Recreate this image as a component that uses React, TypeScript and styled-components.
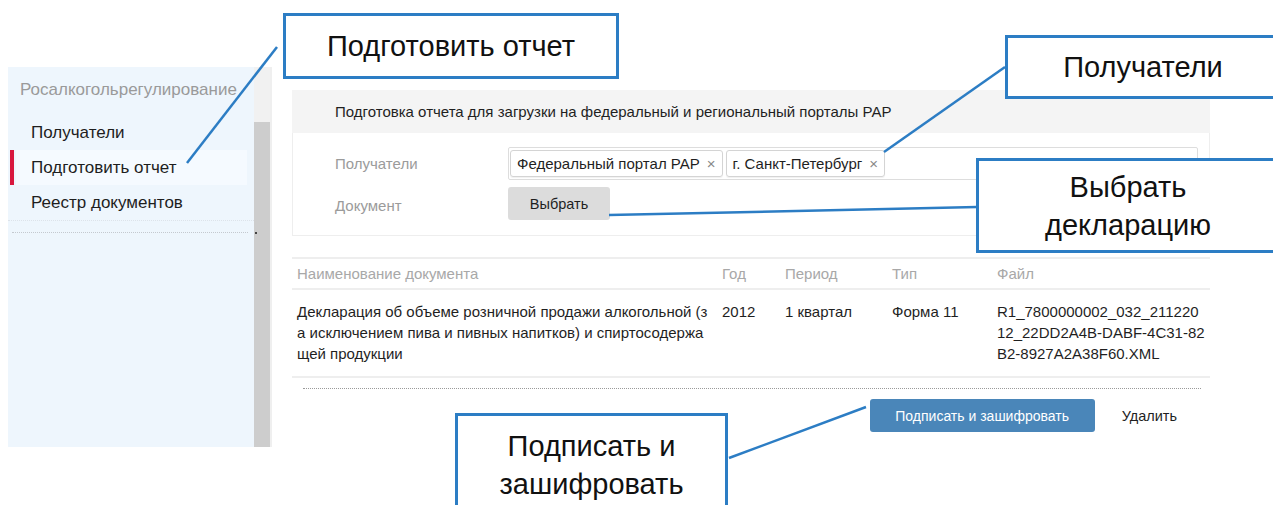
import React from 'react'
import styled, { createGlobalStyle } from 'styled-components'

const GlobalStyle = createGlobalStyle`
  html, body {
    margin: 0;
    padding: 0;
    background: #fff;
  }
  body {
    font-family: 'Liberation Sans', Arial, sans-serif;
    color: #222;
    overflow: hidden;
  }
`

const ACCENT = '#2c7dc4'

const Page = styled.div`
  position: relative;
  width: 1273px;
  height: 505px;
  display: flex;
  align-items: flex-start;
  overflow: hidden;
`

/* ---------- left menu ---------- */

const Sidebar = styled.aside`
  display: flex;
  margin: 67px 0 0 8px;
  height: 380px;
`

const Nav = styled.nav`
  width: 246px;
  background: #eef6fd;
  display: flex;
  flex-direction: column;
`

const NavTitle = styled.div`
  padding: 13px 0 0 12px;
  height: 35px;
  line-height: 20px;
  font-size: 17px;
  color: #9a9a9a;
  white-space: nowrap;
`

const NavItem = styled.a<{ active?: boolean }>`
  position: relative;
  display: flex;
  align-items: center;
  height: 35px;
  margin: 0 7px 0 8px;
  padding-left: 15px;
  font-size: 17px;
  color: #1e1e1e;
  text-decoration: none;
  background: ${(p) => (p.active ? '#f5faff' : 'transparent')};
  &::before {
    content: '';
    display: ${(p) => (p.active ? 'block' : 'none')};
    position: absolute;
    left: -6px;
    top: 0;
    bottom: 0;
    width: 4px;
    background: #d8173e;
  }
`

const NavRule = styled.div<{ faint?: boolean; gap?: number }>`
  margin: ${(p) => p.gap ?? 0}px 0 0 ${(p) => (p.faint ? 0 : 4)}px;
  width: ${(p) => (p.faint ? 246 : 236)}px;
  border-top: 1px dotted ${(p) => (p.faint ? '#dde3ea' : '#c4c9cf')};
`

const Scrollbar = styled.div`
  width: 16px;
  display: flex;
  flex-direction: column;
  border-right: 2px solid #efefef;
`

const ScrollTrack = styled.div`
  height: 55px;
  background: #f1f1f1;
`

const ScrollThumb = styled.div`
  flex: 1;
  background: #cdcdcd;
  display: flex;
  flex-direction: column;
  &::before {
    content: '';
    width: 2px;
    height: 2px;
    margin: 110px 0 0 1px;
    background: #444;
  }
`

/* ---------- main area ---------- */

const Main = styled.main`
  margin: 90px 0 0 20px;
  width: 918px;
  display: flex;
  flex-direction: column;
`

const PanelHead = styled.div`
  height: 43px;
  line-height: 43px;
  padding-left: 43px;
  background: #f4f4f4;
  font-size: 15px;
  color: #1f1f1f;
`

const PanelBody = styled.div`
  border: 1px solid #eeeeee;
  border-top: none;
  padding: 14px 10px 0 42px;
  box-sizing: border-box;
  height: 103px;
  display: flex;
  flex-direction: column;
  gap: 7px;
`

const FormRow = styled.div`
  display: flex;
  align-items: center;
`

const Label = styled.span<{ shift?: number }>`
  width: 173px;
  flex: none;
  padding-top: ${(p) => p.shift ?? 0}px;
  font-size: 15px;
  color: #9b9b9b;
`

const TagInput = styled.div`
  width: 690px;
  height: 33px;
  box-sizing: border-box;
  border: 1px solid #dddddd;
  border-radius: 2px;
  display: flex;
  align-items: center;
  gap: 3px;
  padding-left: 1px;
`

const Tag = styled.span`
  display: inline-flex;
  align-items: center;
  gap: 7px;
  height: 27px;
  padding: 0 6px 0 6px;
  box-sizing: border-box;
  border: 1px solid #d4d4d4;
  border-radius: 3px;
  box-shadow: 0 1px 1px rgba(0, 0, 0, 0.06);
  font-size: 15px;
  color: #1f1f1f;
  white-space: nowrap;
`

const TagClose = styled.span`
  font-size: 15px;
  color: #888;
`

const GreyButton = styled.button`
  width: 102px;
  height: 33px;
  border: none;
  border-radius: 3px;
  background: #dcdcdc;
  font-family: inherit;
  font-size: 14.5px;
  color: #1f1f1f;
`

const Table = styled.table`
  margin-top: 21px;
  width: 918px;
  table-layout: fixed;
  border-collapse: collapse;
  border-top: 2px solid #eeeeee;
  font-size: 15px;
`

const Th = styled.th`
  height: 29px;
  padding: 0 5px;
  text-align: left;
  font-weight: normal;
  color: #a8a8a8;
  border-bottom: 2px solid #eeeeee;
`

const Td = styled.td<{ wrapAll?: boolean }>`
  padding: 11px 5px 12px;
  vertical-align: top;
  line-height: 21px;
  color: #1f1f1f;
  word-break: ${(p) => (p.wrapAll ? 'break-all' : 'normal')};
  border-bottom: 2px solid #eeeeee;
`

const DottedRule = styled.div`
  margin: 10px 9px 0 11px;
  border-top: 1px dotted #9a9a9a;
`

const Actions = styled.div`
  display: flex;
  justify-content: flex-end;
  align-items: center;
  gap: 27px;
  margin-top: 10px;
  padding-right: 33px;
`

const PrimaryButton = styled.button`
  width: 225px;
  height: 33px;
  border: none;
  border-radius: 3px;
  background: #4a86b9;
  color: #fff;
  font-family: inherit;
  font-size: 14px;
`

const LinkButton = styled.span`
  font-size: 14.5px;
  color: #1f1f1f;
`

/* ---------- callouts ---------- */

const Callout = styled.div<{ x: number; y: number; w: number; h: number }>`
  position: absolute;
  left: ${(p) => p.x}px;
  top: ${(p) => p.y}px;
  width: ${(p) => p.w}px;
  height: ${(p) => p.h}px;
  box-sizing: border-box;
  border: 3px solid ${ACCENT};
  background: #fff;
  display: flex;
  flex-direction: column;
  justify-content: center;
  align-items: center;
  font-size: 29px;
  line-height: 38px;
  color: #111;
  text-align: center;
`

const Leaders = styled.svg`
  position: absolute;
  left: 0;
  top: 0;
  pointer-events: none;
`

const leaderLines = [
  [277, 47, 187, 163],
  [1005, 67, 884, 152],
  [609, 215, 977, 207],
  [729, 458, 866, 407]
]

export default function App() {
  return (
    <Page>
      <GlobalStyle />
      <Sidebar>
        <Nav>
          <NavTitle>Росалкогольрегулирование</NavTitle>
          <NavItem>Получатели</NavItem>
          <NavItem active>Подготовить отчет</NavItem>
          <NavItem>Реестр документов</NavItem>
          <NavRule faint />
          <NavRule gap={11} />
        </Nav>
        <Scrollbar>
          <ScrollTrack />
          <ScrollThumb />
        </Scrollbar>
      </Sidebar>

      <Main>
        <PanelHead>Подготовка отчета для загрузки на федеральный и региональный порталы РАР</PanelHead>
        <PanelBody>
          <FormRow>
            <Label>Получатели</Label>
            <TagInput>
              <Tag>
                Федеральный портал РАР <TagClose>×</TagClose>
              </Tag>
              <Tag>
                г. Санкт-Петербург <TagClose>×</TagClose>
              </Tag>
            </TagInput>
          </FormRow>
          <FormRow>
            <Label shift={3}>Документ</Label>
            <GreyButton>Выбрать</GreyButton>
          </FormRow>
        </PanelBody>

        <Table>
          <colgroup>
            <col style={{ width: 425 }} />
            <col style={{ width: 63 }} />
            <col style={{ width: 107 }} />
            <col style={{ width: 105 }} />
            <col style={{ width: 218 }} />
          </colgroup>
          <thead>
            <tr>
              <Th>Наименование документа</Th>
              <Th>Год</Th>
              <Th>Период</Th>
              <Th>Тип</Th>
              <Th>Файл</Th>
            </tr>
          </thead>
          <tbody>
            <tr>
              <Td wrapAll style={{ paddingRight: 8 }}>
                Декларация об объеме розничной продажи алкогольной (за исключением пива и пивных напитков) и спиртосодержащей продукции
              </Td>
              <Td>2012</Td>
              <Td>1 квартал</Td>
              <Td>Форма 11</Td>
              <Td wrapAll style={{ paddingRight: 4 }}>
                R1_7800000002_032_21122012_22DD2A4B-DABF-4C31-82B2-8927A2A38F60.XML
              </Td>
            </tr>
          </tbody>
        </Table>

        <DottedRule />

        <Actions>
          <PrimaryButton>Подписать и зашифровать</PrimaryButton>
          <LinkButton>Удалить</LinkButton>
        </Actions>
      </Main>

      <Leaders width={1273} height={505}>
        {leaderLines.map(([x1, y1, x2, y2], i) => (
          <line key={i} x1={x1} y1={y1} x2={x2} y2={y2} stroke={ACCENT} strokeWidth={2.5} />
        ))}
      </Leaders>

      <Callout x={283} y={13} w={336} h={66}>
        Подготовить отчет
      </Callout>
      <Callout x={1005} y={35} w={276} h={64}>
        Получатели
      </Callout>
      <Callout x={976} y={158} w={304} h={95}>
        <span>Выбрать</span>
        <span>декларацию</span>
      </Callout>
      <Callout x={455} y={413} w={273} h={110} style={{ justifyContent: 'flex-start', paddingTop: 11 }}>
        <span>Подписать и</span>
        <span>зашифровать</span>
      </Callout>
    </Page>
  )
}
